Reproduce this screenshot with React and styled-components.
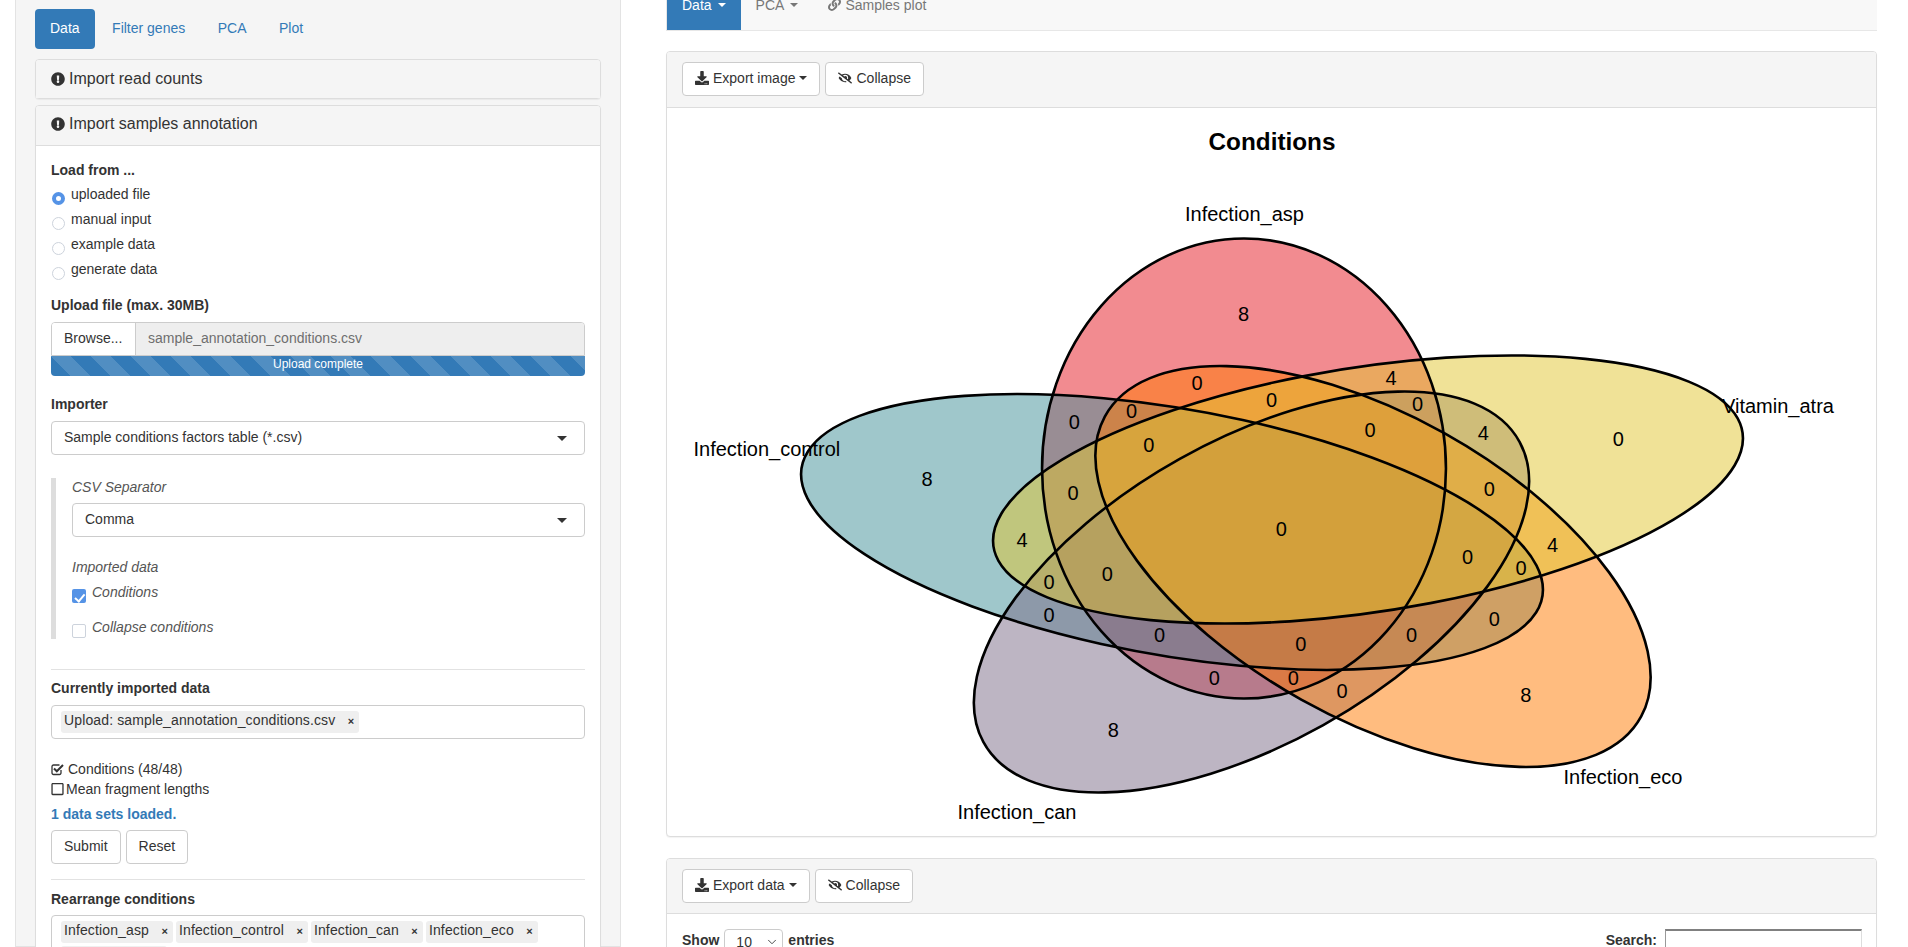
import React from 'react';
import styled, {createGlobalStyle} from 'styled-components';
import {ChevronDown} from 'lucide-react';
import {
    FaExclamationCircle,
    FaDownload,
    FaEyeSlash,
    FaRegSquare,
    FaLink,
} from 'react-icons/fa';

const GlobalStyle = createGlobalStyle`
    html, body {
        margin: 0;
        padding: 0;
        background: #fff;
    }
    body {
        font-family: "Liberation Sans", Arial, sans-serif;
        font-size: 14px;
        line-height: 20px;
        color: #333;
    }
    * {
        box-sizing: border-box;
    }
`;

const Page = styled.div`
    display: flex;
    height: 947px;
    overflow: hidden;
    padding-left: 15px;
`;

const Sidebar = styled.div`
    width: 606px;
    flex: none;
    background: #f5f5f5;
    border: 1px solid #e3e3e3;
    border-top: 0;
    padding: 9px 19px;
`;

const Tabs = styled.div`
    display: flex;
    gap: 2.5px;
    margin-bottom: 10px;
`;

const Tab = styled.div`
    padding: 9px 15px 11px;
    border-radius: 4px;
    height: 40px;
    color: ${(props) => (props.$active ? '#fff' : '#337ab7')};
    background: ${(props) => (props.$active ? '#337ab7' : 'transparent')};
`;

const Panel = styled.div`
    background: #fff;
    border: 1px solid #ddd;
    border-radius: 4px;
    margin-bottom: ${(props) => props.$gap || 0}px;
    box-shadow: 0 1px 1px rgba(0, 0, 0, .05);
`;

const PanelHeading = styled.div`
    display: flex;
    align-items: center;
    gap: 4px;
    height: ${(props) => props.$height || 38}px;
    padding: 0 15px ${(props) => props.$lift || 0}px;
    background: #f5f5f5;
    font-size: 16px;
    border-radius: 3px 3px 0 0;
    border-bottom: ${(props) => (props.$open ? '1px solid #ddd' : '0')};

    svg {
        width: 14px;
        height: 14px;
    }
`;

const PanelBody = styled.div`
    padding: 14px 15px 0;
`;

const FieldLabel = styled.div`
    font-weight: 700;
    margin-top: ${(props) => props.$top || 0}px;
    margin-bottom: ${(props) => props.$bottom || 0}px;
    color: ${(props) => props.$color || 'inherit'};
`;

const RadioGroup = styled.div`
    display: flex;
    flex-direction: column;
    gap: 5px;
    margin-top: 4px;
`;

const OptionRow = styled.label`
    display: flex;
    align-items: flex-start;
    gap: 6px;
    height: 20px;
    margin-top: ${(props) => props.$top || 0}px;
`;

const Radio = styled.input.attrs({type: 'radio', readOnly: true})`
    appearance: none;
    flex: none;
    width: 13px;
    height: 13px;
    margin: 8px 0 0 1px;
    border-radius: 50%;
    border: 1px solid #cdd3dc;
    background: #fff;

    &:checked {
        border: 4.5px solid #5593e6;
    }
`;

const Checkbox = styled.input.attrs({type: 'checkbox', readOnly: true})`
    appearance: none;
    position: relative;
    flex: none;
    width: 14px;
    height: 14px;
    margin: 7px 0 0 0;
    border-radius: 2px;
    border: 1px solid #cdd3dc;
    background: #fff;

    &:checked {
        border: 0;
        background: #5593e6;
    }
    &:checked::after {
        content: "";
        position: absolute;
        left: 5px;
        top: 2.5px;
        width: 4px;
        height: 7.5px;
        border: solid #fff;
        border-width: 0 2px 2px 0;
        transform: rotate(40deg);
    }
`;

const InputGroup = styled.div`
    display: flex;
    height: 34px;
    border: 1px solid #ccc;
    border-radius: 4px 4px 0 0;
    overflow: hidden;
`;

const BrowseButton = styled.div`
    width: 84px;
    flex: none;
    padding: 5px 12px;
    background: #fff;
    border-right: 1px solid #ccc;
`;

const FileName = styled.div`
    flex: 1;
    padding: 5px 12px;
    background: #eee;
    color: #6f6f6f;
`;

const UploadBar = styled.div`
    height: 20px;
    border-radius: 0 0 4px 4px;
    background-color: #337ab7;
    background-image: linear-gradient(45deg, rgba(255, 255, 255, .15) 25%, transparent 25%, transparent 50%, rgba(255, 255, 255, .15) 50%, rgba(255, 255, 255, .15) 75%, transparent 75%, transparent);
    background-size: 40px 40px;
    color: #fff;
    font-size: 12px;
    line-height: 17px;
    text-align: center;
`;

const SelectBox = styled.div`
    position: relative;
    height: 34px;
    padding: 5px 12px;
    background: #fff;
    border: 1px solid #ccc;
    border-radius: 4px;

    &::after {
        content: "";
        position: absolute;
        right: 17px;
        top: 14px;
        border: 5px solid transparent;
        border-top-color: #333;
        border-bottom: 0;
    }
`;

const Indent = styled.div`
    margin-top: 23px;
    height: 161px;
    border-left: 5px solid #ddd;
    padding-left: 16px;
`;

const ItalicLabel = styled.div`
    font-style: italic;
    color: #555;
    line-height: ${(props) => props.$line || 20}px;
    margin-top: ${(props) => props.$top || 0}px;
    margin-bottom: ${(props) => props.$bottom || 0}px;
`;

const ItalicOption = styled(OptionRow)`
    font-style: italic;
    color: #555;
`;

const Rule = styled.hr`
    border: 0;
    border-top: 1px solid #e2e2e2;
    margin: ${(props) => props.$top}px 0 0;
`;

const TagBox = styled.div`
    display: flex;
    flex-wrap: wrap;
    min-height: 34px;
    padding: 5px 9px 0;
    background: #fff;
    border: 1px solid #ccc;
    border-radius: 4px;
`;

const Tag = styled.div`
    display: flex;
    justify-content: space-between;
    height: 22px;
    width: ${(props) => (props.$width ? `${props.$width}px` : 'auto')};
    margin: 0 3px 3px 0;
    padding-left: 3px;
    line-height: 19px;
    letter-spacing: .13px;
    background: #efefef;
    border-radius: 3px;
`;

const TagRemove = styled.span`
    width: 24px;
    padding-right: 5px;
    text-align: right;
    font-size: 11px;
    font-weight: 700;
    line-height: 21px;
    color: #333;
`;

const StatusRow = styled.div`
    display: flex;
    align-items: center;
    gap: ${(props) => props.$gap}px;
    margin-top: ${(props) => props.$top || 0}px;

    svg {
        width: 13px;
        height: 14px;
    }
`;

const ButtonRow = styled.div`
    display: flex;
    gap: ${(props) => props.$gap || 5}px;
    margin-top: ${(props) => props.$top || 0}px;
`;

const Button = styled.div`
    display: flex;
    align-items: center;
    gap: 4px;
    height: 34px;
    padding: 0 12px 2px;
    font-size: 14px;
    background: #fff;
    border: 1px solid #ccc;
    border-radius: 4px;

    svg {
        width: 14px;
        height: 14px;
    }
`;

const Caret = styled.span`
    display: inline-block;
    border-top: 4px solid ${(props) => props.$color || '#333'};
    border-left: 4px solid transparent;
    border-right: 4px solid transparent;
    margin-left: ${(props) => props.$left || 0}px;
`;

const Main = styled.div`
    width: 1211px;
    flex: none;
    margin-left: 45px;
`;

const Navbar = styled.div`
    display: flex;
    height: 51px;
    margin-top: -20px;
    margin-bottom: 20px;
    background: #f8f8f8;
    border: 1px solid #e7e7e7;
    border-top: 0;
    border-right: 0;
`;

const NavItem = styled.div`
    display: flex;
    align-items: center;
    height: 50px;
    padding: 0 15px 1px;
    color: ${(props) => (props.$active ? '#fff' : '#777')};
    background: ${(props) => (props.$active ? '#337ab7' : 'transparent')};

    svg {
        width: 13px;
        height: 13px;
        margin-right: 4px;
    }
`;

const PlotPanel = styled(Panel)`
    height: 786px;
    margin-bottom: 21px;
`;

const PlotSvg = styled.svg`
    display: block;
    width: 100%;
    height: 730px;
`;

const SetFill = styled.ellipse`
    fill: ${(props) => props.$color};
    fill-opacity: .5;
`;

const SetStroke = styled.ellipse`
    fill: none;
    stroke: #000;
    stroke-width: 2.6px;
    vector-effect: non-scaling-stroke;
`;

const PlotTitle = styled.text`
    font-family: "Liberation Sans", Arial, sans-serif;
    font-size: 24.3px;
    font-weight: 700;
    text-anchor: middle;
    dominant-baseline: central;
`;

const SetLabel = styled.text`
    font-family: "Liberation Sans", Arial, sans-serif;
    font-size: 20px;
    dominant-baseline: central;
`;

const CountLabel = styled(SetLabel)`
    text-anchor: middle;
`;

const TableTools = styled.div`
    display: flex;
    justify-content: space-between;
    padding: 15px 14px 0 15px;
    font-weight: 700;
`;

const ToolGroup = styled.div`
    display: flex;
    gap: ${(props) => props.$gap}px;
    line-height: 22px;
`;

const LengthSelect = styled.div`
    display: flex;
    justify-content: space-between;
    align-items: center;
    width: 59px;
    height: 26px;
    padding: 0 3px 0 11px;
    font-weight: 400;
    border: 1px solid #ccc;
    border-radius: 4px;
`;

const SearchInput = styled.div`
    width: 197px;
    height: 26px;
    border-top: 2px solid #808080;
    border-left: 1px solid #999;
    border-right: 1px solid #ddd;
`;

// counts are kept in page coordinates, the svg viewBox starts at the panel corner
const sets = [
    {color: '#e51721', cx: 1244, cy: 468.5, angle: 90},
    {color: '#3f8f97', cx: 1172, cy: 532, angle: 20.5},
    {color: '#7b6b87', cx: 1251.5, cy: 592, angle: -55},
    {color: '#ff7900', cx: 1373, cy: 566.5, angle: 55},
    {color: '#e1c52f', cx: 1368, cy: 489.5, angle: -18},
];

const setLabels = [
    ['Infection_asp', 1185, 214],
    ['Infection_control', 693.5, 449],
    ['Vitamin_atra', 1722, 406],
    ['Infection_eco', 1563.5, 776.5],
    ['Infection_can', 957.5, 811.5],
];

const counts = [
    [8, 1243.6, 314], [0, 1197, 383], [4, 1391, 378], [0, 1417.5, 404], [0, 1271.6, 400],
    [0, 1131.6, 411], [0, 1074.4, 422], [4, 1483.3, 433], [0, 1148.7, 445], [0, 1370, 429.5],
    [0, 1618.4, 439], [8, 927, 479.4], [0, 1073, 493], [0, 1489.4, 489], [4, 1022, 540],
    [0, 1281.3, 529.3], [0, 1467.5, 557.3], [0, 1521, 568], [4, 1552.6, 545], [0, 1107.3, 574.3],
    [0, 1049, 581.6], [0, 1049, 614.5], [0, 1494.3, 619.3], [0, 1159.6, 635], [0, 1411.5, 635],
    [0, 1300.8, 643.7], [0, 1214.4, 677.7], [0, 1293.4, 677.7], [0, 1342, 691], [8, 1525.9, 694.8],
    [8, 1113.4, 730],
];

function setTransform(set) {
    return `translate(${set.cx} ${set.cy}) scale(1.69 1) rotate(${set.angle})`;
}

function VennPlot() {
    return (
        <PlotSvg viewBox="667 108 1209 730">
            <PlotTitle x={1272} y={141}>Conditions</PlotTitle>
            {sets.map((set) => (
                <SetFill key={set.cx} rx={230} ry={119.5} $color={set.color} transform={setTransform(set)}/>
            ))}
            {sets.map((set) => (
                <SetStroke key={set.cx} rx={230} ry={119.5} transform={setTransform(set)}/>
            ))}
            {setLabels.map(([name, x, y]) => (
                <SetLabel key={name} x={x} y={y}>{name}</SetLabel>
            ))}
            {counts.map(([value, x, y]) => (
                <CountLabel key={`${x}-${y}`} x={x} y={y}>{value}</CountLabel>
            ))}
        </PlotSvg>
    );
}

// old font-awesome check-square-o, the tick runs out past the box
function CheckedSquare() {
    return (
        <svg viewBox="0 0 13 14" fill="none" stroke="#333">
            <path d="M10 8v3a1.5 1.5 0 0 1-1.5 1.5h-6A1.5 1.5 0 0 1 1 11V4.500A1.500 1.500 0 0 1 2.500 3h6" strokeWidth="1.300"/>
            <path d="M3 6.500l2.800 2.800L12 3" strokeWidth="2"/>
        </svg>
    );
}

function TagItem({children, width}) {
    return (
        <Tag $width={width}>
            {children}
            <TagRemove>×</TagRemove>
        </Tag>
    );
}

function App() {
    return (
        <Page>
            <GlobalStyle/>
            <Sidebar>
                <Tabs>
                    <Tab $active>Data</Tab>
                    <Tab>Filter genes</Tab>
                    <Tab>PCA</Tab>
                    <Tab>Plot</Tab>
                </Tabs>

                <Panel $gap={6}>
                    <PanelHeading><FaExclamationCircle/>Import read counts</PanelHeading>
                </Panel>

                <Panel>
                    <PanelHeading $open $height={40} $lift={3}><FaExclamationCircle/>Import samples annotation</PanelHeading>
                    <PanelBody>
                        <FieldLabel>Load from ...</FieldLabel>
                        <RadioGroup>
                            <OptionRow><Radio defaultChecked name="source"/>uploaded file</OptionRow>
                            <OptionRow><Radio name="source"/>manual input</OptionRow>
                            <OptionRow><Radio name="source"/>example data</OptionRow>
                            <OptionRow><Radio name="source"/>generate data</OptionRow>
                        </RadioGroup>

                        <FieldLabel $top={16} $bottom={7}>Upload file (max. 30MB)</FieldLabel>
                        <InputGroup>
                            <BrowseButton>Browse...</BrowseButton>
                            <FileName>sample_annotation_conditions.csv</FileName>
                        </InputGroup>
                        <UploadBar>Upload complete</UploadBar>

                        <FieldLabel $top={18} $bottom={7}>Importer</FieldLabel>
                        <SelectBox>Sample conditions factors table (*.csv)</SelectBox>

                        <Indent>
                            <ItalicLabel $line={18} $bottom={7}>CSV Separator</ItalicLabel>
                            <SelectBox>Comma</SelectBox>
                            <ItalicLabel $top={20}>Imported data</ItalicLabel>
                            <ItalicOption $top={5}><Checkbox defaultChecked/>Conditions</ItalicOption>
                            <ItalicOption $top={15}><Checkbox/>Collapse conditions</ItalicOption>
                        </Indent>

                        <Rule $top={30}/>
                        <FieldLabel $top={8} $bottom={7}>Currently imported data</FieldLabel>
                        <TagBox>
                            <TagItem>Upload: sample_annotation_conditions.csv</TagItem>
                        </TagBox>

                        <StatusRow $gap={4} $top={20}><CheckedSquare/>Conditions (48/48)</StatusRow>
                        <StatusRow $gap={2}><FaRegSquare/>Mean fragment lengths</StatusRow>
                        <FieldLabel $top={5} $color="#337ab7">1 data sets loaded.</FieldLabel>
                        <ButtonRow $top={6}>
                            <Button>Submit</Button>
                            <Button>Reset</Button>
                        </ButtonRow>

                        <Rule $top={15}/>
                        <FieldLabel $top={9} $bottom={6}>Rearrange conditions</FieldLabel>
                        <TagBox>
                            <TagItem>Infection_asp</TagItem>
                            <TagItem>Infection_control</TagItem>
                            <TagItem>Infection_can</TagItem>
                            <TagItem>Infection_eco</TagItem>
                            <TagItem width={106}>Vitamin_atra</TagItem>
                        </TagBox>
                    </PanelBody>
                </Panel>
            </Sidebar>

            <Main>
                <Navbar>
                    <NavItem $active>Data<Caret $color="#fff" $left={6}/></NavItem>
                    <NavItem>PCA<Caret $color="#777" $left={6}/></NavItem>
                    <NavItem><FaLink/>Samples plot</NavItem>
                </Navbar>

                <PlotPanel>
                    <PanelHeading $open $height={56} $lift={2}>
                        <ButtonRow>
                            <Button><FaDownload/>Export image<Caret/></Button>
                            <Button><FaEyeSlash/>Collapse</Button>
                        </ButtonRow>
                    </PanelHeading>
                    <VennPlot/>
                </PlotPanel>

                <Panel>
                    <PanelHeading $open $height={55}>
                        <ButtonRow>
                            <Button><FaDownload/>Export data<Caret/></Button>
                            <Button><FaEyeSlash/>Collapse</Button>
                        </ButtonRow>
                    </PanelHeading>
                    <TableTools>
                        <ToolGroup $gap={5}>Show <LengthSelect>10<ChevronDown size={14} strokeWidth={1.5}/></LengthSelect> entries</ToolGroup>
                        <ToolGroup $gap={8}>Search: <SearchInput/></ToolGroup>
                    </TableTools>
                </Panel>
            </Main>
        </Page>
    );
}

export default App;
